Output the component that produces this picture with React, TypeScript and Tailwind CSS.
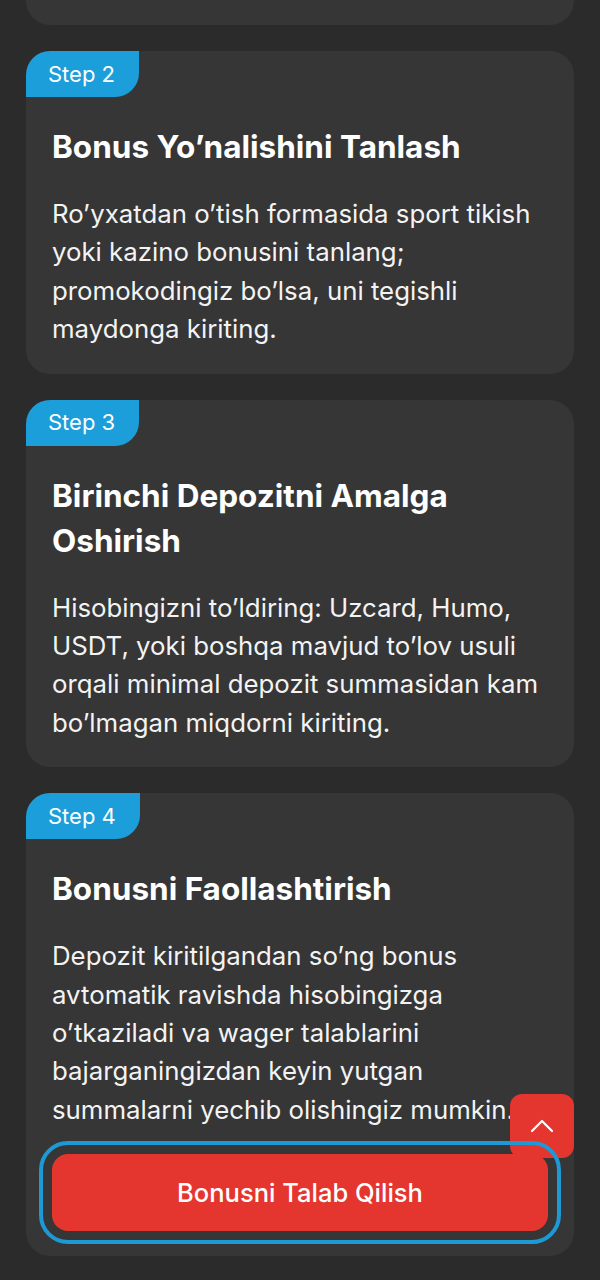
import React from "react";

const steps = [
  {
    n: 2,
    title: "Bonus Yo’nalishini Tanlash",
    text: "Ro’yxatdan o’tish formasida sport tikish yoki kazino bonusini tanlang; promokodingiz bo’lsa, uni tegishli maydonga kiriting.",
  },
  {
    n: 3,
    title: "Birinchi Depozitni Amalga Oshirish",
    text: "Hisobingizni to’ldiring: Uzcard, Humo, USDT, yoki boshqa mavjud to’lov usuli orqali minimal depozit summasidan kam bo’lmagan miqdorni kiriting.",
  },
  {
    n: 4,
    title: "Bonusni Faollashtirish",
    text: "Depozit kiritilgandan so’ng bonus avtomatik ravishda hisobingizga o’tkaziladi va wager talablarini bajarganingizdan keyin yutgan summalarni yechib olishingiz mumkin.",
    button: true,
  },
];

export default function App() {
  return (
    <div
      className="min-h-[1280px] bg-[#2b2b2b] px-[26px] pb-[24px] text-[#f7f7f7]"
      style={{ fontFamily: "Inter, 'Noto Sans', sans-serif" }}
    >
      <div className="flex flex-col gap-[26px]">
        <div className="h-[25px] rounded-b-[24px] bg-[#363636]" />
        {steps.map((s) => (
          <div key={s.n} className="rounded-[24px] bg-[#363636] pb-[25px]">
            <div className="inline-flex h-[46px] items-center rounded-tl-[24px] rounded-br-[24px] bg-[#1b9ed9] pl-[22px] pr-[24px] text-[22px] text-white">
              Step {s.n}
            </div>
            <div className="px-[26px]">
              <h2 className="mt-[27px] text-[31.5px] font-bold leading-[45px] text-white">{s.title}</h2>
              <p className="mt-[26px] text-[25.8px] leading-[38.4px] text-[#f3f3f3]">{s.text}</p>
              {s.button && (
                <div className="mt-[25px]">
                  <button className="relative z-10 flex h-[77px] w-full items-center justify-center rounded-[16px] bg-[#e5352f] text-[25.5px] font-medium text-white outline-4 outline-solid outline-offset-[9px] outline-[#1d9ad6]">
                    Bonusni Talab Qilish
                  </button>
                </div>
              )}
            </div>
          </div>
        ))}
      </div>
      <button className="fixed bottom-[122px] right-[26px] flex h-[64px] w-[64px] items-center justify-center rounded-[12px] bg-[#e5352f]">
        <svg width="30" height="30" viewBox="0 0 24 24" fill="none" stroke="white" strokeWidth="1.8" strokeLinecap="round" strokeLinejoin="round">
          <path d="M4 16l8-8 8 8" />
        </svg>
      </button>
    </div>
  );
}
